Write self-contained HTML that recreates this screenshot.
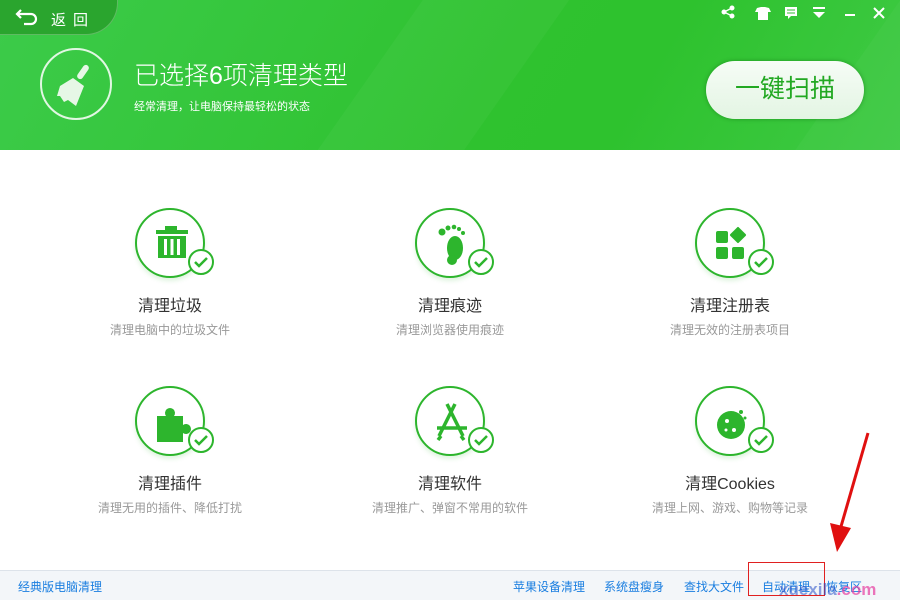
<!DOCTYPE html><html><head><meta charset="utf-8"><style>
*{margin:0;padding:0;box-sizing:border-box}
body{width:900px;height:600px;overflow:hidden;background:#fff;font-family:"Liberation Sans","Noto Sans CJK SC",sans-serif;position:relative}
.hd{position:absolute;left:0;top:0;width:900px;height:150px;background:linear-gradient(120deg,#3ccb4a 0%,#2fc22f 55%,#2ec22e 70%,#3fca45 100%);overflow:hidden}
.stripe{position:absolute;background:rgba(255,255,255,.035);width:120px;height:400px;transform:rotate(35deg)}
.back{position:absolute;left:0;top:0;width:118px;height:35px;background:#2aa52e;border-bottom-right-radius:32px;border-right:1px solid rgba(255,255,255,.25);border-bottom:1px solid rgba(255,255,255,.25);color:#fff;font-size:15px}
.bigc{position:absolute;left:40px;top:48px;width:72px;height:72px;border:2px solid rgba(255,255,255,.85);border-radius:50%}
.t1{position:absolute;left:134px;top:56px;color:#fff;font-size:25px;font-weight:300}
.t2{position:absolute;left:134px;top:98px;color:#fff;font-size:11px}
.btn{position:absolute;left:706px;top:61px;width:158px;height:58px;border-radius:29px;background:linear-gradient(#f6fcf6,#e3f5e3);box-shadow:0 0 4px rgba(0,80,0,.4);color:#22a822;font-size:25px;text-align:center;line-height:56px}
.it{position:absolute;width:200px;text-align:center}
.ci{position:absolute;left:65px;top:0;width:70px;height:70px;border:2px solid #2db52d;border-radius:50%;box-shadow:0 3px 4px rgba(45,181,45,.15);background:#fff}
.ck{position:absolute;left:118px;top:41px;width:26px;height:26px;border-radius:50%;background:#fff;border:2px solid #2db52d}
.tt{position:absolute;top:84px;left:0;width:200px;font-size:16px;color:#333}
.st{position:absolute;top:113px;left:0;width:200px;font-size:12px;color:#999}
.ft{position:absolute;left:0;top:570px;width:900px;height:30px;background:#f3f6f9;border-top:1px solid #dde3ea;font-size:12px;color:#1a7ee0}
.ft span{position:absolute;top:7px}
</style></head><body>
<div class="hd">
<div class="stripe" style="left:380px;top:-120px"></div>
<div class="stripe" style="left:820px;top:-60px;width:160px"></div>
<div class="back"><svg style="position:absolute;left:15px;top:8px" width="26" height="18" viewBox="0 0 26 18"><path d="M6 2 L2 6 L6 10 M2 6 H16 a5 5 0 0 1 0 10 H9" stroke="#fff" stroke-width="2.2" fill="none"/></svg><span style="position:absolute;left:51px;top:9px;letter-spacing:7px">返回</span></div>
<div class="bigc"><svg width="72" height="72" viewBox="0 0 72 72" style="position:absolute;left:-2px;top:-2px"><g fill="#e6f7e6"><rect x="40" y="16" width="6" height="16" rx="3" transform="rotate(35 43 24)"/><path d="M33 30 L44 38 L36 58 L28 52 L24 54 L20 48 L17 48 L20 38 Z"/></g></svg></div>
<div class="t1">已选择6项清理类型</div>
<div class="t2">经常清理，让电脑保持最轻松的状态</div>
<svg style="position:absolute;left:720px;top:5px" width="175" height="16" viewBox="0 0 175 16" fill="#fff" stroke="#fff">
<circle cx="12" cy="3" r="2"/><circle cx="4" cy="7" r="2"/><circle cx="12" cy="11" r="2"/><path d="M12 3L4 7L12 11" fill="none" stroke-width="1.3"/>
<path d="M37 3l4-1h4l4 1l2 4h-3v8h-10v-8h-3z" stroke="none"/>
<path d="M65 2h12v9h-6l-3 3v-3h-3z" stroke="none"/><path d="M67 5h8M67 8h8" stroke="#30c030"/>
<path d="M93 3h12" stroke-width="2"/><path d="M93 7h12l-6 6z" stroke="none"/>
<path d="M125 10h10" stroke-width="2"/>
<path d="M154 3l10 10M164 3l-10 10" stroke-width="2"/></svg>
<div class="btn">一键扫描</div>
</div>

<div class="it" style="left:70px;top:208px"><div class="ci"><svg width="70" height="70" viewBox="0 0 70 70"><g fill="#2db52d"><rect x="28" y="16" width="12" height="4"/><rect x="19" y="20" width="32" height="4"/><path d="M21 26h28v22h-28z"/></g><g fill="#fff"><rect x="27" y="29" width="3" height="16"/><rect x="33.5" y="29" width="3" height="16"/><rect x="40" y="29" width="3" height="16"/></g></svg></div><div class="ck"><svg width="22" height="22" viewBox="0 0 22 22"><path d="M5 11l4 4l8-8" stroke="#2db52d" stroke-width="2.5" fill="none"/></svg></div><div class="tt">清理垃圾</div><div class="st">清理电脑中的垃圾文件</div></div>

<div class="it" style="left:350px;top:208px"><div class="ci"><svg width="70" height="70" viewBox="0 0 70 70" fill="#2db52d"><ellipse cx="38" cy="38" rx="8" ry="12"/><ellipse cx="35" cy="50" rx="5" ry="5"/><circle cx="25" cy="22" r="3.5"/><circle cx="31" cy="18" r="2.5"/><circle cx="37" cy="17" r="2.3"/><circle cx="42" cy="19" r="2"/><circle cx="46" cy="23" r="2"/></svg></div><div class="ck"><svg width="22" height="22" viewBox="0 0 22 22"><path d="M5 11l4 4l8-8" stroke="#2db52d" stroke-width="2.5" fill="none"/></svg></div><div class="tt">清理痕迹</div><div class="st">清理浏览器使用痕迹</div></div>

<div class="it" style="left:630px;top:208px"><div class="ci"><svg width="70" height="70" viewBox="0 0 70 70" fill="#2db52d"><rect x="19" y="21" width="12" height="12" rx="2"/><rect x="35" y="19" width="12" height="12" rx="1" transform="rotate(45 41 25)"/><rect x="19" y="37" width="12" height="12" rx="2"/><rect x="35" y="37" width="12" height="12" rx="2"/></svg></div><div class="ck"><svg width="22" height="22" viewBox="0 0 22 22"><path d="M5 11l4 4l8-8" stroke="#2db52d" stroke-width="2.5" fill="none"/></svg></div><div class="tt">清理注册表</div><div class="st">清理无效的注册表项目</div></div>

<div class="it" style="left:70px;top:386px"><div class="ci"><svg width="70" height="70" viewBox="0 0 70 70" fill="#2db52d"><path d="M20 28h9a5 5 0 1 1 8 0h9v9a5 5 0 1 1 0 8v9h-26z"/></svg></div><div class="ck"><svg width="22" height="22" viewBox="0 0 22 22"><path d="M5 11l4 4l8-8" stroke="#2db52d" stroke-width="2.5" fill="none"/></svg></div><div class="tt">清理插件</div><div class="st">清理无用的插件、降低打扰</div></div>

<div class="it" style="left:350px;top:386px"><div class="ci"><svg width="70" height="70" viewBox="0 0 70 70" stroke="#2db52d" stroke-width="3.5" fill="none"><path d="M38 16L22 48M30 16L46 48M20 40h30M24 48l-3 4M44 48l3 4"/></svg></div><div class="ck"><svg width="22" height="22" viewBox="0 0 22 22"><path d="M5 11l4 4l8-8" stroke="#2db52d" stroke-width="2.5" fill="none"/></svg></div><div class="tt">清理软件</div><div class="st">清理推广、弹窗不常用的软件</div></div>

<div class="it" style="left:630px;top:386px"><div class="ci"><svg width="70" height="70" viewBox="0 0 70 70"><circle cx="34" cy="37" r="14" fill="#2db52d"/><circle cx="30" cy="33" r="2" fill="#fff"/><circle cx="37" cy="42" r="2" fill="#fff"/><circle cx="29" cy="42" r="1.5" fill="#fff"/><circle cx="44" cy="24" r="2" fill="#2db52d"/><circle cx="48" cy="30" r="1.5" fill="#2db52d"/></svg></div><div class="ck"><svg width="22" height="22" viewBox="0 0 22 22"><path d="M5 11l4 4l8-8" stroke="#2db52d" stroke-width="2.5" fill="none"/></svg></div><div class="tt">清理Cookies</div><div class="st">清理上网、游戏、购物等记录</div></div>

<div class="ft"><span style="left:18px">经典版电脑清理</span><span style="left:513px">苹果设备清理</span><span style="left:604px">系统盘瘦身</span><span style="left:684px">查找大文件</span><span style="left:762px">自动清理</span><span style="left:826px">恢复区</span></div>
<div style="position:absolute;left:748px;top:562px;width:77px;height:34px;border:1px solid #e02020"></div>
<div style="position:absolute;left:779px;top:580px;font-size:17px;font-weight:bold;color:rgba(40,80,200,.55)">xuexila<span style="color:rgba(230,60,160,.7)">.com</span></div>
<svg style="position:absolute;left:825px;top:430px" width="50" height="125" viewBox="0 0 50 125"><path d="M43 3L15 100" stroke="#e01010" stroke-width="3"/><path d="M5 93L12 122L26 98Z" fill="#e01010"/></svg>
</body></html>
